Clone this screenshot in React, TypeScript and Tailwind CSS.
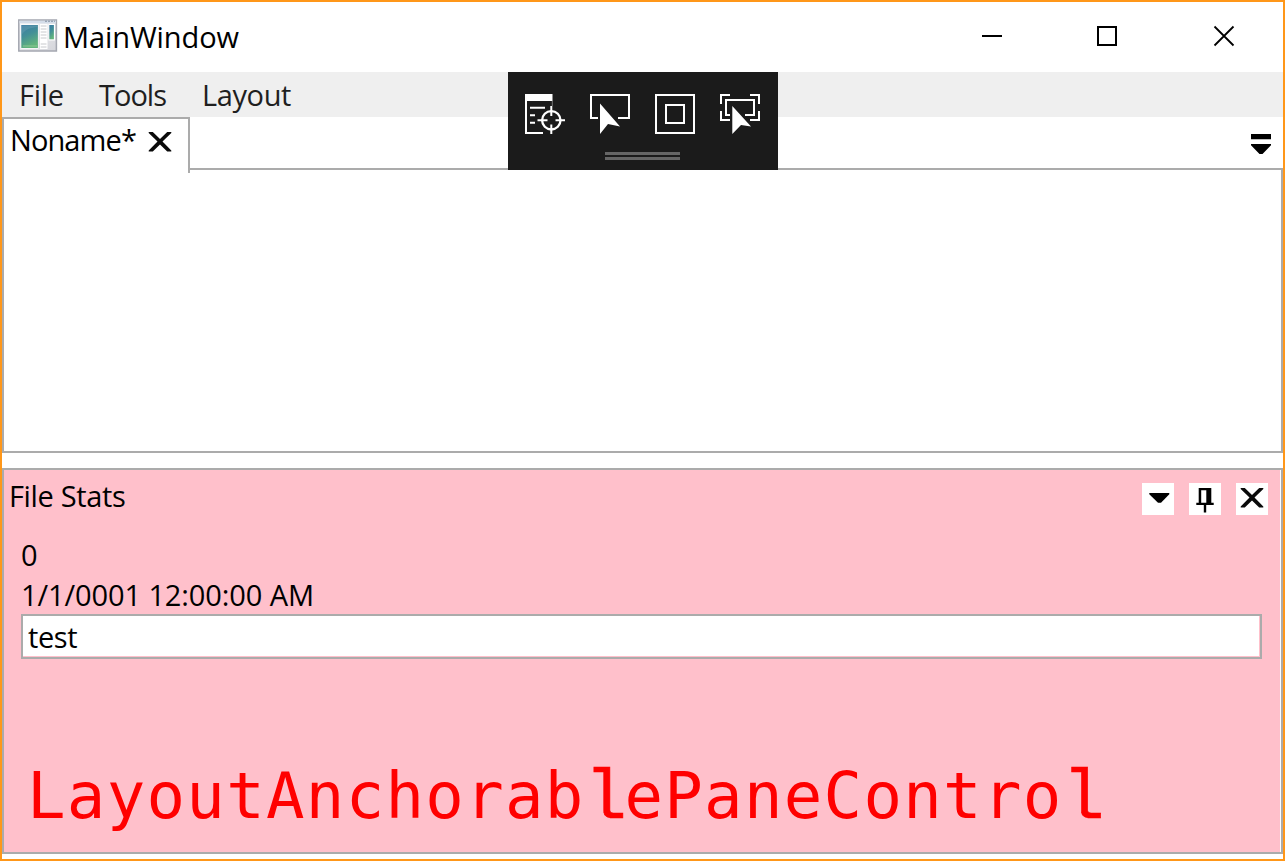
import type { ReactNode } from "react";

const sans = "font-['Open_Sans','Noto_Sans',sans-serif] whitespace-pre";

function AppIcon() {
  return (
    <svg className="block" width="40" height="34" viewBox="0 0 40 34">
      <defs>
        <linearGradient id="screen" x1="0" y1="0" x2="0.35" y2="1">
          <stop offset="0" stopColor="#3a7ba6" />
          <stop offset="0.5" stopColor="#438f97" />
          <stop offset="1" stopColor="#62b47c" />
        </linearGradient>
        <linearGradient id="frame" x1="0" y1="0" x2="1" y2="1">
          <stop offset="0" stopColor="#f4f5f8" />
          <stop offset="1" stopColor="#d4d5da" />
        </linearGradient>
      </defs>
      <rect x="0.8" y="1" width="37.6" height="31" fill="url(#frame)" stroke="#a4a7b0" strokeWidth="1.5" />
      <path d="M1.5 3H38" stroke="#d4dde9" strokeWidth="2.5" />
      <path d="M27 2.3H37" stroke="#9aa5b5" strokeWidth="1.5" strokeDasharray="2 1" />
      <rect x="2.5" y="4.8" width="18" height="25" fill="#fafafa" />
      <rect x="3.3" y="6" width="16.6" height="23" fill="url(#screen)" />
      <path d="M3.5 16C8 9 13 9 19.5 8V6.5H3.5Z" fill="#79a8b8" opacity="0.35" />
      <path d="M5 27H19" stroke="#9bcf9b" strokeWidth="0.8" />
      <rect x="22" y="5" width="7.5" height="25" fill="#fff" />
      <path d="M22.7 7H28.5M22.7 10H28.5M22.7 13H28.5M22.7 16H28.5M22.7 19H28.5M22.7 25H28.5M22.7 28H28.5" stroke="#c8cacd" strokeWidth="1" />
      <rect x="30.5" y="5" width="6.5" height="16.5" fill="#fff" />
      <rect x="31.3" y="6" width="4.6" height="14.3" fill="url(#screen)" />
    </svg>
  );
}

function CrossIcon() {
  return (
    <svg className="block" width="24" height="22" viewBox="0 0 24 22">
      <path d="M0.7 1H4.8L12 8L19.2 1H23.3V2L14.5 10.6L23.3 19.4V20.6H19.2L12 13.6L4.8 20.6H0.7V19.4L9.5 10.6L0.7 2Z" fill="#0a0a0a" />
    </svg>
  );
}

function Caption({ children }: { children: ReactNode }) {
  return <button className="flex h-8 w-8 items-center justify-center bg-white">{children}</button>;
}

/* The slab-footed "l" comes from a second monospaced face. */
function SlabL() {
  return <span className="font-['Liberation_Mono',monospace] text-[70px] leading-[0] tracking-[-2.2px] [-webkit-text-stroke:0.6px_#ff0000]">l</span>;
}

function DebugToolbar() {
  return (
    <div className="absolute left-[506px] top-[70px] z-20 h-[98px] w-[270px] bg-[#1b1b1b]">
      <svg className="block" width="270" height="98" viewBox="0 0 270 98" fill="none" stroke="#fff" strokeWidth="2">
        <rect x="17" y="22" width="27.5" height="7" fill="#fff" stroke="none" />
        <path d="M18 22V61H35" />
        <path d="M44.3 29V34" strokeWidth="1" stroke="#777" />
        <path d="M22 35.7H37M22 43.3H27M22 50.7H27" />
        <circle cx="43.3" cy="48.3" r="9.2" strokeWidth="2.3" />
        <path d="M43.3 34V44M43.3 52.5V62M29.5 48.3H39.5M47.5 48.3H57" />
        <path d="M90 46H83V23H121V46H110" />
        <path d="M92 31.5L112 54.5L100 52L92 62Z" fill="#fff" stroke="none" />
        <rect x="148" y="23" width="38" height="38" />
        <rect x="158" y="33" width="18" height="18" />
        <path d="M222 23H213V32M242 23H251V32M213 39V48H222M251 39V48H242" />
        <path d="M222 43H218V28H246V43H237" />
        <path d="M224.3 34L243 54.5L233 53L224.3 62Z" fill="#fff" stroke="none" />
        <path d="M97 81.5H172M97 86.5H172" stroke="#666" strokeWidth="3" />
      </svg>
    </div>
  );
}

export default function App() {
  return (
    <div className={`relative flex h-[861px] w-[1285px] flex-col overflow-hidden border-2 border-[#ff9719] bg-white text-black ${sans}`}>
      <header className="flex h-[70px] shrink-0 items-start">
        <div className="ml-4 mt-[17px]">
          <AppIcon />
        </div>
        <h1 className="ml-[5px] mt-[15px] text-[29px] leading-[40px] tracking-[-0.1px]">MainWindow</h1>
        <svg className="ml-auto mr-[47px] mt-[22px] block" width="254" height="24" viewBox="0 0 254 24" fill="none" stroke="#000" strokeWidth="2">
          <path d="M0 12H20" />
          <rect x="116" y="3" width="18" height="18" />
          <path d="M232.5 2.5L251.5 21.5M251.5 2.5L232.5 21.5" strokeWidth="1.8" />
        </svg>
      </header>
      <nav className="flex h-[45px] shrink-0 items-start bg-[#efefef] text-[29px] leading-[40px] text-[#1f1f1f]">
        <span className="ml-[17px] mt-[3px] w-[80px] tracking-[-0.3px]">File</span>
        <span className="mt-[3px] w-[103px] tracking-[-1px]">Tools</span>
        <span className="mt-[3px] tracking-[-0.4px]">Layout</span>
      </nav>
      <section className="flex h-[336px] shrink-0 flex-col">
        <div className="flex h-[51px] shrink-0">
          <div className="z-10 flex h-[56px] w-[188px] border-2 border-b-0 border-[#ababab] bg-white">
            <span className="ml-[6px] mt-px w-[138px] text-[29px] leading-[40px] tracking-[-0.9px]">Noname*</span>
            <div className="mt-[12px]">
              <CrossIcon />
            </div>
          </div>
          <svg className="ml-auto mr-[11px] mt-[16px] block" width="22" height="22" viewBox="0 0 22 22">
            <path d="M1 1H21V6.3H1ZM1 11H21V12.2L12.5 21H9.5L1 12.2Z" fill="#000" />
          </svg>
        </div>
        <div className="flex-1 border-2 border-[#ababab]" />
      </section>
      <section className="mt-[15px] flex h-[386px] shrink-0 flex-col border-2 border-[#ababab] bg-white pr-px">
        <div className="flex flex-1 flex-col bg-[#ffc0cb]">
          <div className="flex h-[65px] shrink-0">
            <h2 className="ml-[5px] mt-[6px] text-[29px] leading-[40px] tracking-[-0.35px]">File Stats</h2>
            <div className="ml-auto mr-3 mt-[13px] flex gap-[15px]">
              <Caption>
                <svg width="32" height="32" viewBox="0 0 32 32">
                  <path d="M7.3 10H27.3V11.2L19 19.7H16L7.3 11.2Z" fill="#000" />
                </svg>
              </Caption>
              <Caption>
                <svg width="32" height="32" viewBox="0 0 32 32">
                  <path d="M9.7 5H22.3V19.7H24.7V22H17.2V29.5H14.8V22H7.3V19.7H9.7ZM12.2 7.3V19.7H17.3V7.3Z" fill="#000" fillRule="evenodd" />
                </svg>
              </Caption>
              <Caption>
                <div className="-mt-[2px]">
                  <CrossIcon />
                </div>
              </Caption>
            </div>
          </div>
          <div className="ml-[17px] mr-[18px] flex flex-col text-[29px] leading-[40px]">
            <span>0</span>
            <span className="h-[39px] tracking-[-0.1px]">1/1/0001 12:00:00 AM</span>
            <div className="h-[45px] border-2 border-[#ababab] pb-px pr-px">
              <input className="block h-full w-full bg-white pl-[5px] tracking-[-0.4px] outline-none" defaultValue="test" />
            </div>
          </div>
          <div className="ml-[23px] mt-[92px] font-['DejaVu_Sans_Mono',monospace] text-[64px] leading-[90px] tracking-[1.3px] text-[#ff0000]">
            LayoutAnchorab<SlabL />ePaneContro<SlabL />
          </div>
        </div>
      </section>
      <DebugToolbar />
    </div>
  );
}
